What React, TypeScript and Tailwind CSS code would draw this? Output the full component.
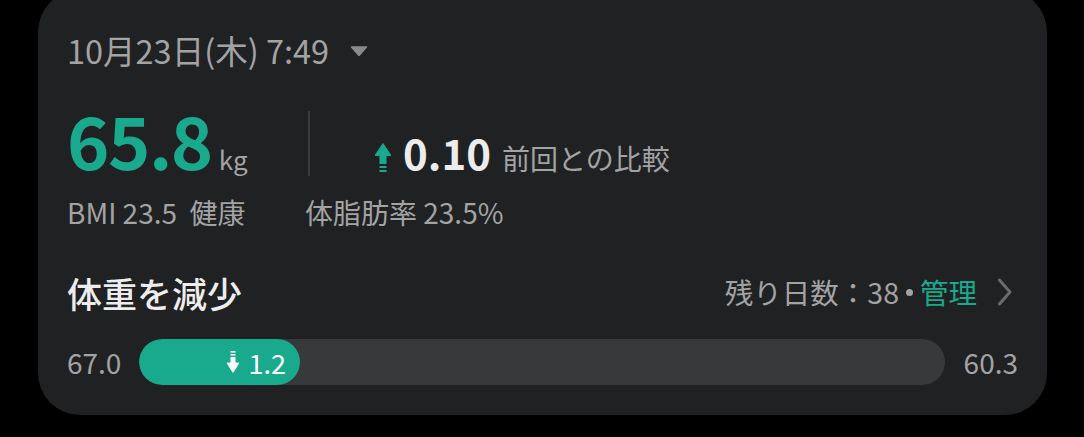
import React from "react";

const font = { fontFamily: '"Noto Sans CJK JP", "Noto Sans", sans-serif' };

function UpArrow() {
  return (
    <svg width="16" height="30" viewBox="0 0 16 30" className="shrink-0">
      <polygon points="8,0.5 16,12.5 0,12.5" fill="#19a98d" strokeLinejoin="round" stroke="#19a98d" strokeWidth="1" />
      <rect x="4.5" y="12" width="7" height="9" fill="#19a98d" />
      <rect x="4.5" y="23" width="7" height="2" fill="#19a98d" />
      <rect x="4.5" y="27" width="7" height="2" fill="#19a98d" />
    </svg>
  );
}

function DownArrow() {
  return (
    <svg width="12" height="22" viewBox="0 0 12 22" className="shrink-0">
      <rect x="3.5" y="0" width="5" height="1.6" fill="#fff" />
      <rect x="3.5" y="3" width="5" height="1.6" fill="#fff" />
      <rect x="3.5" y="6" width="5" height="7" fill="#fff" />
      <polygon points="0,12 12,12 6,21.5" fill="#fff" stroke="#fff" strokeWidth="0.8" strokeLinejoin="round" />
    </svg>
  );
}

export default function App() {
  return (
    <div className="min-h-screen w-full bg-black overflow-hidden" style={font}>
      <div className="ml-[38px] -mt-[10px] w-[1009px] h-[425px] rounded-[42px] bg-[#202123] pl-[29px] pr-[29px]">
        {/* date row */}
        <div className="flex items-center pt-[40px] h-[80px]">
          <span className="text-[32.5px] leading-[40px] text-[#a3a3a3]">10月23日(木) 7:49</span>
          <svg width="18" height="10" viewBox="0 0 18 10" className="ml-[21px] mt-[1px]">
            <path d="M1.5 1 H16.5 L9 9.5 Z" fill="#8a8a8a" stroke="#8a8a8a" strokeWidth="1.5" strokeLinejoin="round" />
          </svg>
        </div>

        {/* stats row */}
        <div className="flex items-baseline mt-[33px] h-[72px]">
          <div className="flex items-baseline w-[241px]">
            <span className="text-[72px] leading-none font-bold text-[#19a98d] tracking-[-1.5px]">65.8</span>
            <span className="ml-[7px] text-[26px] leading-none text-[#a3a3a3]">kg</span>
          </div>
          <div className="self-center mt-[8px] w-[2px] h-[65px] bg-[#3a3b3d]" />
          <div className="flex items-baseline ml-[65px]">
            <span className="self-center mt-[12px]"><UpArrow /></span>
            <span className="ml-[12px] text-[42px] leading-none font-bold text-[#ececec]">0.10</span>
            <span className="ml-[11px] text-[28px] leading-none text-[#a3a3a3]">前回との比較</span>
          </div>
        </div>

        {/* bmi row */}
        <div className="flex items-center mt-[19px] h-[36px] text-[28px] text-[#a3a3a3]">
          <span className="w-[238px]">BMI 23.5&nbsp;&nbsp;健康</span>
          <span>体脂肪率 23.5%</span>
        </div>

        {/* goal title row */}
        <div className="flex items-center justify-between mt-[42px] h-[40px]">
          <span className="text-[35px] leading-none font-medium text-[#ededed]">体重を減少</span>
          <div className="flex items-center text-[28.5px] text-[#a3a3a3]">
            <span>残り日数：38</span>
            <span className="mx-[7px] w-[7px] h-[7px] rounded-full bg-[#a3a3a3]" />
            <span className="text-[#19a98d]">管理</span>
            <svg width="16" height="28" viewBox="0 0 16 28" className="ml-[20px] mr-[5px]">
              <path d="M2.5 2 L13 14 L2.5 26" fill="none" stroke="#6b6b6d" strokeWidth="3" strokeLinecap="round" strokeLinejoin="round" />
            </svg>
          </div>
        </div>

        {/* progress row */}
        <div className="flex items-center mt-[27px] h-[46px]">
          <span className="w-[72px] text-[28px] text-[#a3a3a3]">67.0</span>
          <div className="flex-1 h-[46px] rounded-full bg-[#38393b] overflow-hidden">
            <div className="w-[161px] h-full rounded-full bg-[#19a98d] flex items-center justify-end pr-[14px]">
              <DownArrow />
              <span className="ml-[10px] text-[27px] leading-none text-white">1.2</span>
            </div>
          </div>
          <span className="ml-[19px] text-[28px] text-[#a3a3a3]">60.3</span>
        </div>
      </div>
    </div>
  );
}
